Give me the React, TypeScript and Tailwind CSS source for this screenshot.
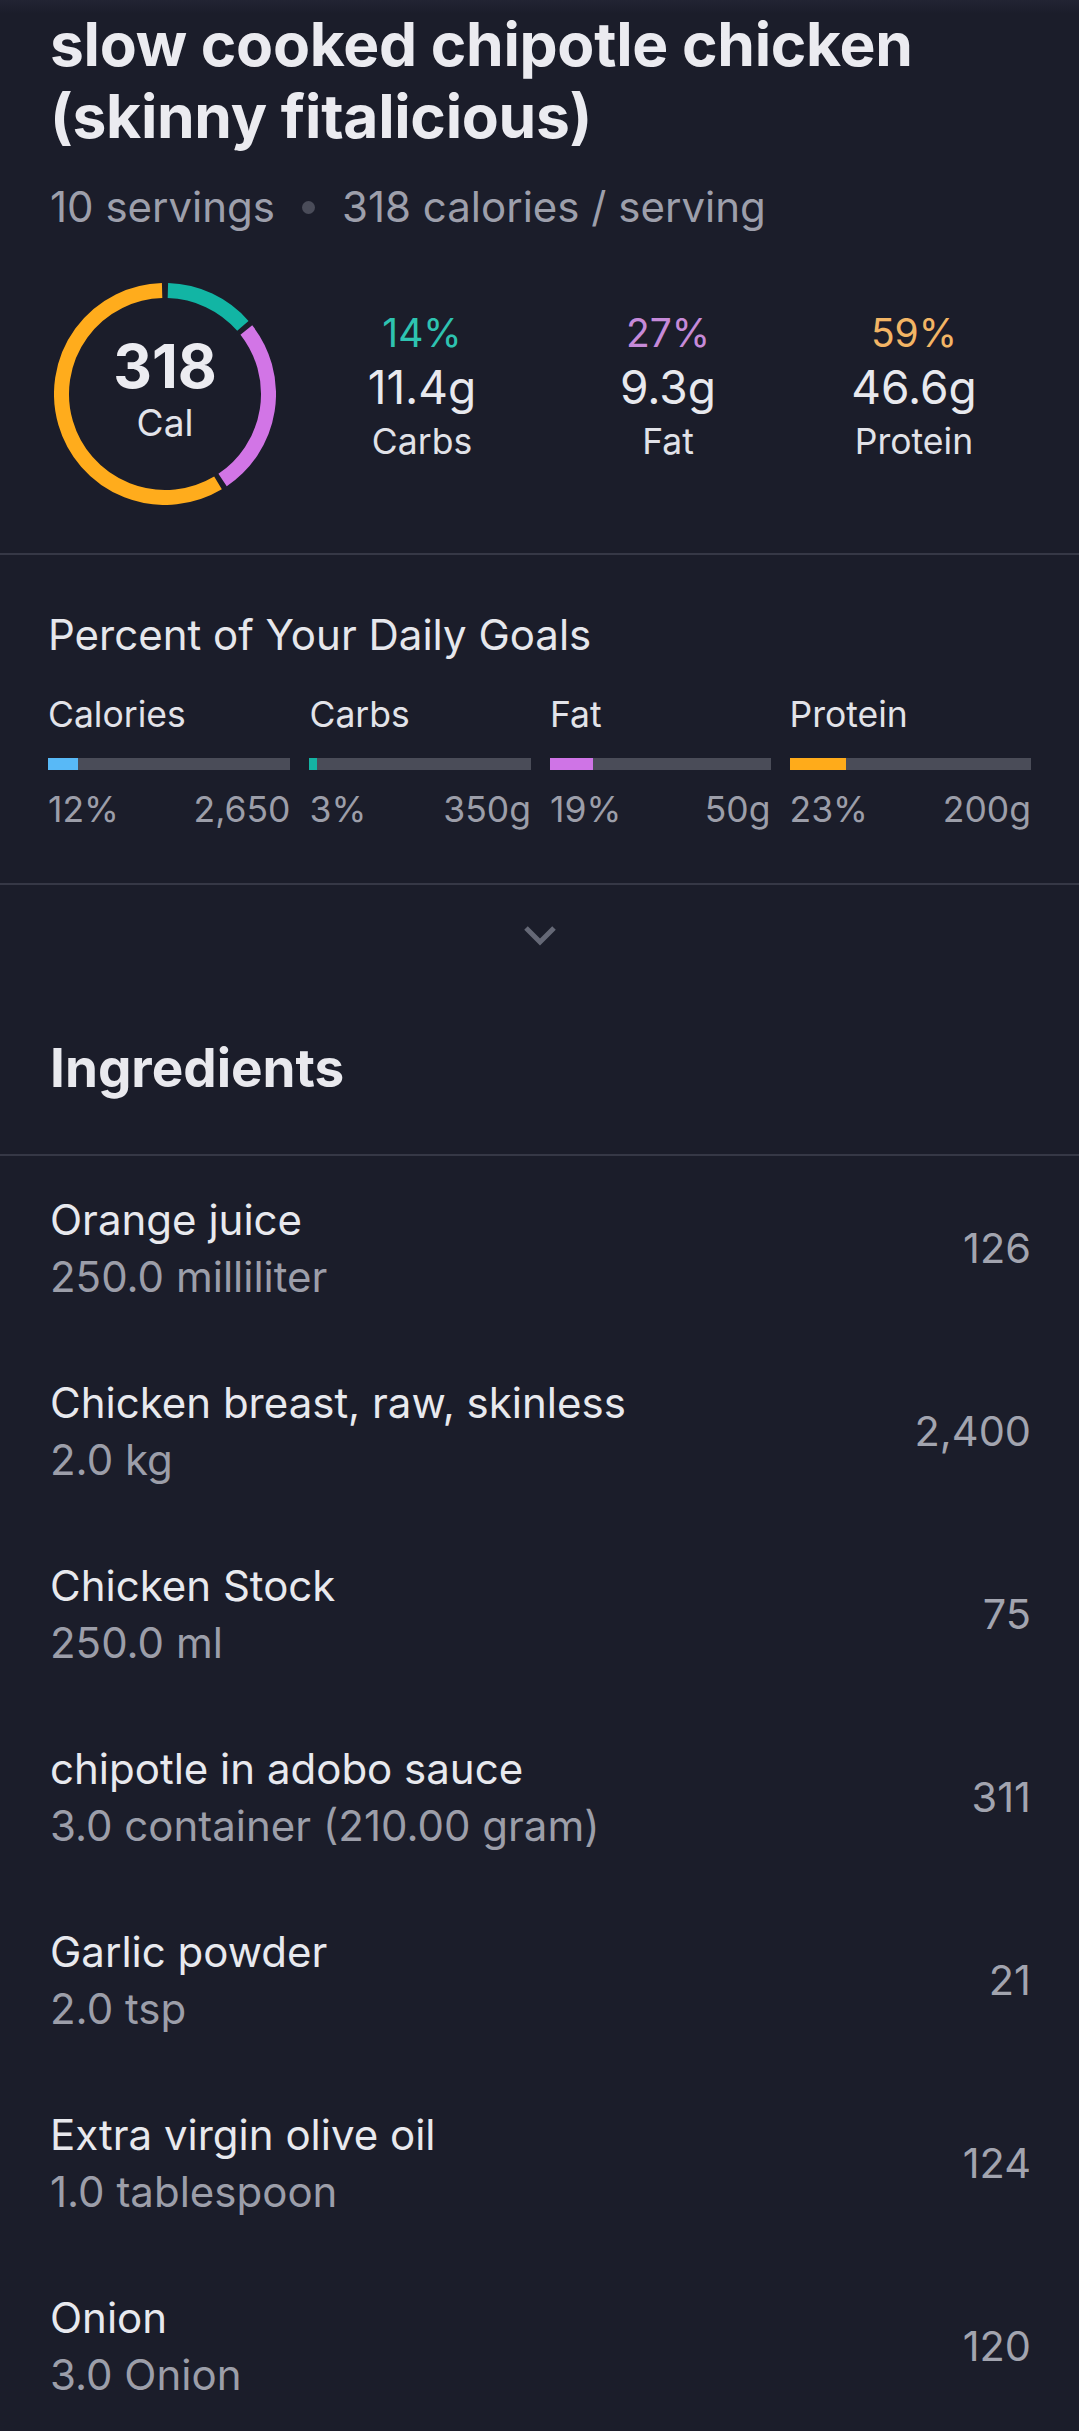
import React from "react";

const CX = 111;
const CY = 111;
const R = 103.5;

function pt(deg: number) {
  const a = (deg * Math.PI) / 180;
  return [CX + R * Math.sin(a), CY - R * Math.cos(a)];
}

function arc(from: number, to: number) {
  const [x1, y1] = pt(from);
  const [x2, y2] = pt(to);
  const large = to - from > 180 ? 1 : 0;
  return `M ${x1.toFixed(2)} ${y1.toFixed(2)} A ${R} ${R} 0 ${large} 1 ${x2.toFixed(2)} ${y2.toFixed(2)}`;
}

function Ring() {
  return (
    <div className="relative w-[222px] h-[222px] shrink-0">
      <svg width="222" height="222" viewBox="0 0 222 222" className="block">
        <path d={arc(1.6, 48.8)} fill="none" stroke="#12b5a4" strokeWidth="15" />
        <path d={arc(51.8, 146.2)} fill="none" stroke="#d275e6" strokeWidth="15" />
        <path d={arc(149.2, 358.4)} fill="none" stroke="#ffac1c" strokeWidth="15" />
      </svg>
      <div className="absolute inset-0 flex flex-col items-center justify-center">
        <div className="text-[60px] leading-[60px] font-bold text-[#ececf1] mt-[-6px]">318</div>
        <div className="text-[37px] leading-[46px] text-[#e3e4ea] mt-[4px]">Cal</div>
      </div>
    </div>
  );
}

function Macro({ pct, color, grams, label }: { pct: string; color: string; grams: string; label: string }) {
  return (
    <div className="flex flex-col items-center">
      <div className={`text-[39px] leading-[52px] ${color}`}>{pct}</div>
      <div className="text-[46px] leading-[56px] text-[#e8e9ee]">{grams}</div>
      <div className="text-[35.5px] leading-[53px] text-[#e1e2e8]">{label}</div>
    </div>
  );
}

function Goal({
  label,
  width,
  fill,
  fillColor,
  pct,
  goal,
}: {
  label: string;
  width: string;
  fill: string;
  fillColor: string;
  pct: string;
  goal: string;
}) {
  return (
    <div className={`flex flex-col ${width}`}>
      <div className="text-[35.5px] leading-[48px] text-[#e2e3e9]">{label}</div>
      <div className="mt-[19.5px] h-[12px] w-full bg-[#4a4c58] flex">
        <div className={`h-full ${fill} ${fillColor}`} />
      </div>
      <div className="mt-[15.5px] flex justify-between text-[35.5px] leading-[48px] text-[#9c9ea9]">
        <span>{pct}</span>
        <span>{goal}</span>
      </div>
    </div>
  );
}

const ingredients = [
  { name: "Orange juice", qty: "250.0 milliliter", cal: "126" },
  { name: "Chicken breast, raw, skinless", qty: "2.0 kg", cal: "2,400" },
  { name: "Chicken Stock", qty: "250.0 ml", cal: "75" },
  { name: "chipotle in adobo sauce", qty: "3.0 container (210.00 gram)", cal: "311" },
  { name: "Garlic powder", qty: "2.0 tsp", cal: "21" },
  { name: "Extra virgin olive oil", qty: "1.0 tablespoon", cal: "124" },
  { name: "Onion", qty: "3.0 Onion", cal: "120" },
];

export default function App() {
  return (
    <div className="relative w-[1079px] min-h-[2431px] bg-[#1b1d2a] text-[#e8e9ee] [font-family:Inter,'Noto_Sans',sans-serif] overflow-hidden">
      <div className="absolute top-0 left-0 right-0 h-[14px] bg-gradient-to-b from-[#222433] to-transparent" />

      <header className="px-[50px] pt-[8px]">
        <h1 className="text-[60.5px] leading-[72px] font-bold text-[#ebebf0] tracking-[-0.3px]">
          slow cooked chipotle chicken
          <br />
          (skinny fitalicious)
        </h1>
        <div className="mt-[31px] flex items-center gap-[27px] text-[42px] leading-[48px] text-[#9d9fab]">
          <span>10 servings</span>
          <span className="w-[13px] h-[13px] rounded-full bg-[#4a4c59]" />
          <span>318 calories / serving</span>
        </div>
      </header>

      <section className="mt-[52px] pl-[54px] pr-[42px] flex items-start">
        <Ring />
        <div className="ml-[23px] mt-[24px] flex-1 grid grid-cols-3">
          <Macro pct="14%" color="text-[#2ec3b1]" grams="11.4g" label="Carbs" />
          <Macro pct="27%" color="text-[#c68ad9]" grams="9.3g" label="Fat" />
          <Macro pct="59%" color="text-[#f3b565]" grams="46.6g" label="Protein" />
        </div>
      </section>

      <div className="mt-[48px] h-[2px] bg-[#363846]" />

      <section className="px-[48px] pt-[54px] pb-[49.5px]">
        <h2 className="text-[42px] leading-[52px] text-[#e6e7ec]">Percent of Your Daily Goals</h2>
        <div className="mt-[29.5px] flex gap-[19px]">
          <Goal label="Calories" width="w-[243px]" fill="w-[30px]" fillColor="bg-[#58b9f7]" pct="12%" goal="2,650" />
          <Goal label="Carbs" width="w-[222px]" fill="w-[8px]" fillColor="bg-[#14b3a3]" pct="3%" goal="350g" />
          <Goal label="Fat" width="w-[221px]" fill="w-[43px]" fillColor="bg-[#cf74e6]" pct="19%" goal="50g" />
          <Goal label="Protein" width="w-[242px]" fill="w-[56px]" fillColor="bg-[#ffab1a]" pct="23%" goal="200g" />
        </div>
      </section>

      <div className="h-[2px] bg-[#363846]" />

      <div className="flex justify-center pt-[39px]">
        <svg width="36" height="22" viewBox="0 0 36 22" fill="none">
          <path d="M4 4 L18 18 L32 4" stroke="#656876" strokeWidth="5" strokeLinecap="butt" strokeLinejoin="miter" />
        </svg>
      </div>

      <h2 className="px-[50px] mt-[87px] text-[53px] leading-[70px] font-bold text-[#e9e9ee]">Ingredients</h2>

      <div className="mt-[51px] h-[2px] bg-[#363846]" />

      <ul>
        {ingredients.map((it) => (
          <li key={it.name} className="h-[183px] pr-[48px] pl-[50px] flex items-center justify-between">
            <div className="flex flex-col">
              <span className="text-[42px] leading-[52px] text-[#e8e9ee]">{it.name}</span>
              <span className="mt-[6.5px] text-[42px] leading-[48px] text-[#9c9ea9]">{it.qty}</span>
            </div>
            <span className="text-[41.5px] leading-[52px] text-[#a2a4af]">{it.cal}</span>
          </li>
        ))}
      </ul>
    </div>
  );
}
